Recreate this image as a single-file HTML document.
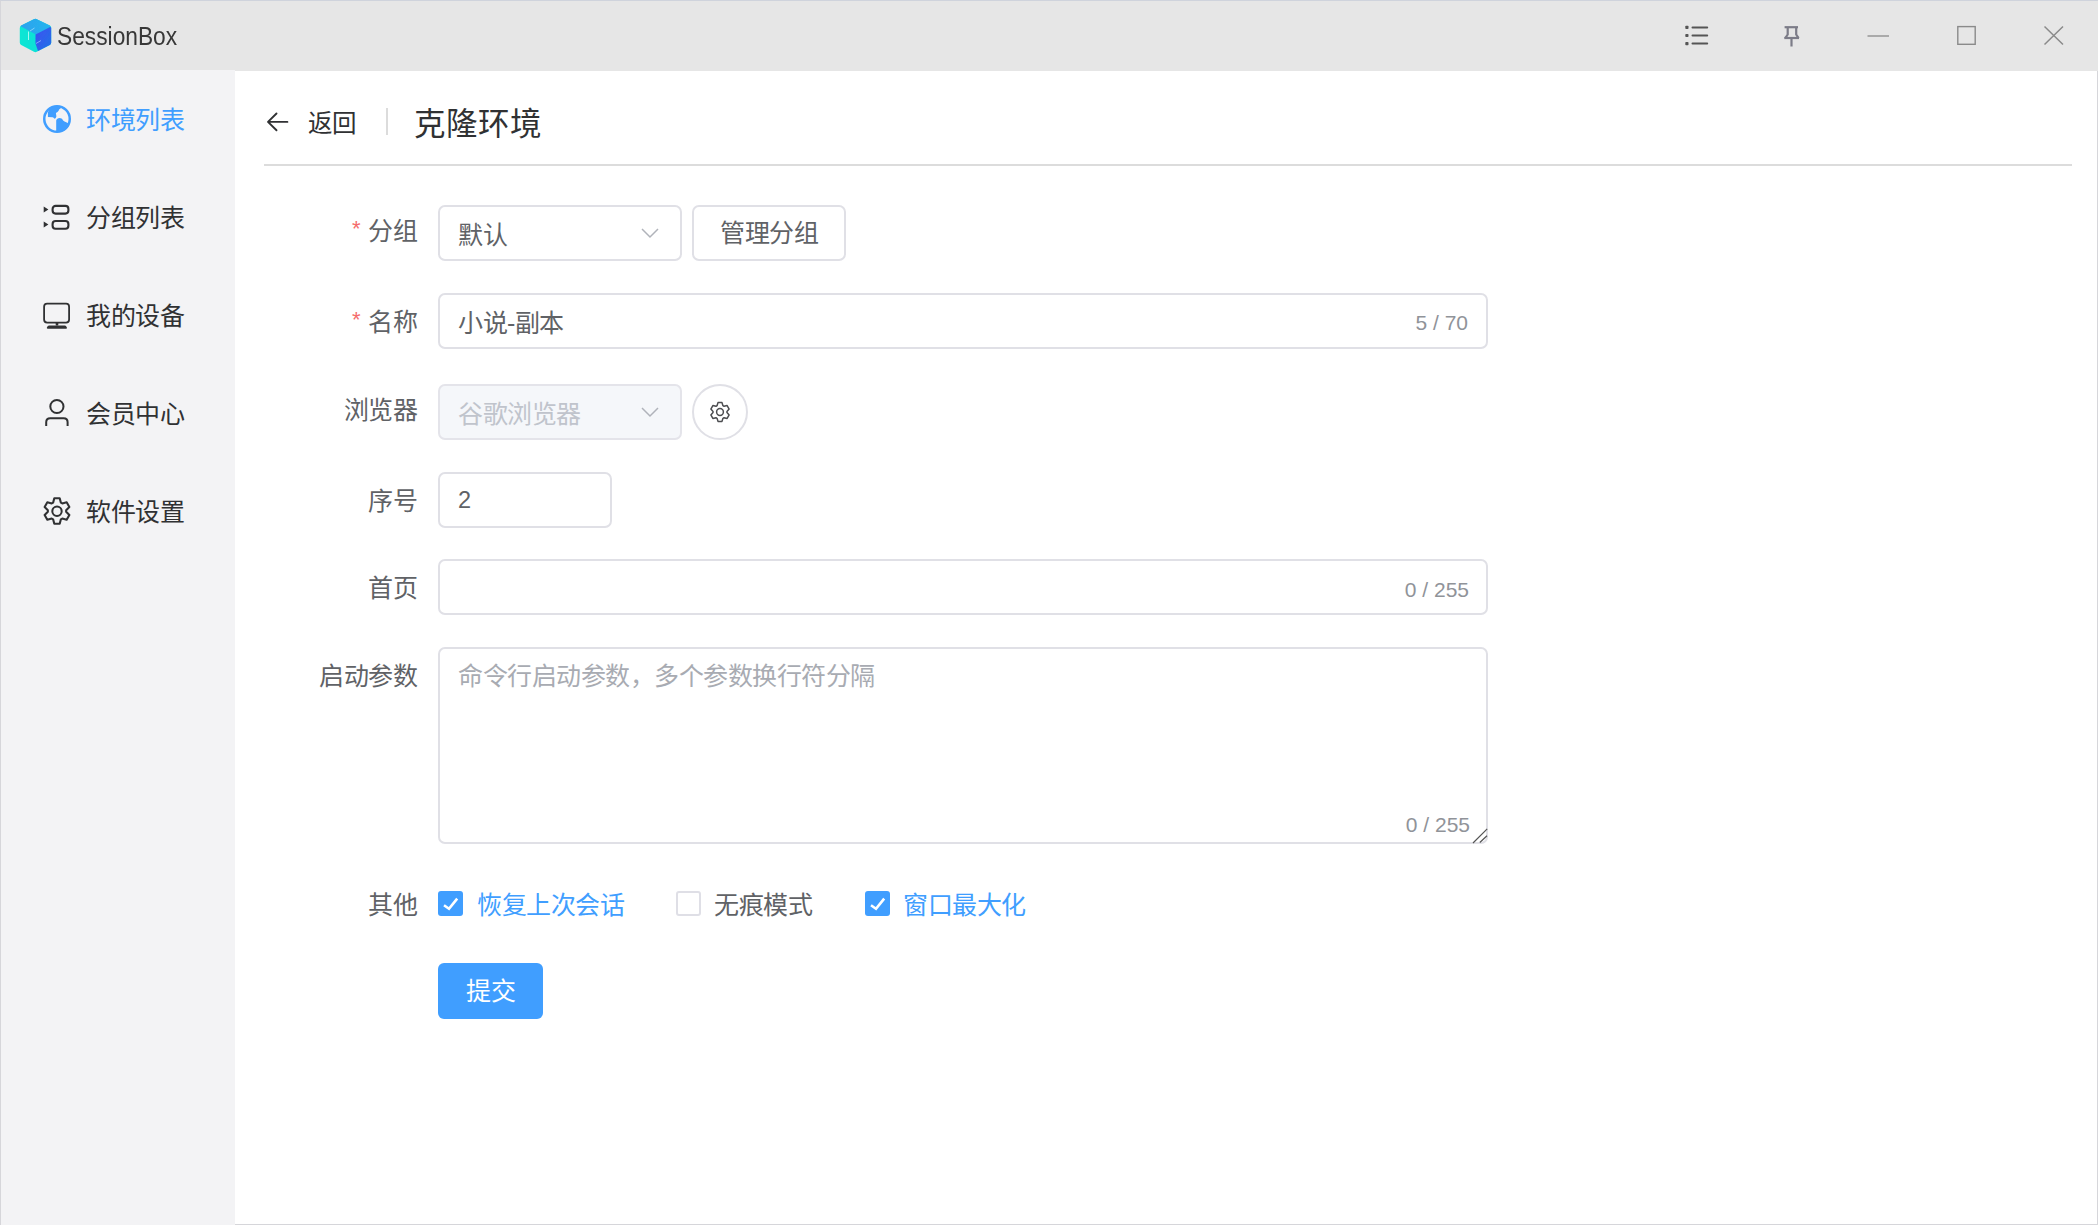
<!DOCTYPE html>
<html lang="zh-CN"><head><meta charset="utf-8">
<style>
*{box-sizing:border-box;margin:0;padding:0}
html,body{width:2098px;height:1225px;overflow:hidden;background:#fff;font-family:"Liberation Sans",sans-serif}
.abs{position:absolute}
#win{position:absolute;left:0;top:0;width:2098px;height:1225px;background:#fff;border:1px solid #d6d6da;border-top-color:#cfd3dc}
#title{position:absolute;left:0;top:0;width:2098px;height:70px;background:#e6e6e6}
#side{position:absolute;left:0px;top:69px;width:234px;height:1155px;background:#f3f3f5}
.nav{position:absolute;left:0;width:235px;height:40px}
.nav .ic{position:absolute;left:42px;top:6px;width:30px;height:30px}
.nav .tx{position:absolute;left:86px;top:0;font-size:25px;letter-spacing:-0.5px;line-height:40px;color:#303133;white-space:nowrap}
.nav.on .tx{color:#409eff}
.lbl{position:absolute;right:1681px;font-size:25px;letter-spacing:-0.5px;line-height:30px;color:#606266;white-space:nowrap;text-align:right}
.req{color:#f56c6c;margin-right:8px;font-size:22px;position:relative;top:-4px}
.inp{position:absolute;left:438px;height:56px;border:2px solid #e0e0e6;border-radius:7px;background:#fff}
.inp .v{position:absolute;left:18px;top:2px;line-height:52px;font-size:25px;letter-spacing:-0.5px;color:#606266;white-space:nowrap}
.cnt{position:absolute;right:18px;font-size:21px;color:#909399;white-space:nowrap}
.chev{position:absolute;right:23px;top:21px;width:18px;height:10px}
.cb{position:absolute;top:891px;width:25px;height:25px;border-radius:3px}
.cb.on{background:#409eff}
.cb.off{border:2px solid #dfdfe6;background:#fff}
.cbt{position:absolute;top:890px;font-size:25px;letter-spacing:-0.5px;line-height:30px;white-space:nowrap}
</style></head>
<body>
<div id="win">
  <div id="title"></div>
  <div id="side"></div>
</div>

<!-- title bar content -->
<svg class="abs" style="left:14px;top:14px" width="42" height="42" viewBox="14 14 42 42">
  <defs>
    <linearGradient id="lg1" x1="0" y1="0" x2="1" y2="0">
      <stop offset="0" stop-color="#0ee6d4"/><stop offset="1" stop-color="#05dcd8"/>
    </linearGradient>
    <linearGradient id="lg2" x1="0" y1="0" x2="1" y2="1">
      <stop offset="0" stop-color="#3d4ff2"/><stop offset="1" stop-color="#1f74e6"/>
    </linearGradient>
    <linearGradient id="lg3" x1="0" y1="0" x2="1" y2="0">
      <stop offset="0" stop-color="#2aa2ee"/><stop offset="1" stop-color="#27b4ee"/>
    </linearGradient>
    <filter id="bl" x="-10%" y="-10%" width="120%" height="120%"><feGaussianBlur stdDeviation="0.55"/></filter>
  </defs>
  <g filter="url(#bl)">
  <path d="M33.8 19.2 Q35.3 18.4 36.8 19.2 L49.8 25.6 Q51.2 26.4 51.2 28 L51.2 42.6 Q51.2 44.2 49.8 45 L36.8 51.8 Q35.4 52.6 34 51.8 L21.2 45 Q19.8 44.2 19.8 42.6 L19.8 28 Q19.8 26.4 21.2 25.6 Z" fill="url(#lg1)"/>
  <path d="M33.8 19.2 Q35.3 18.4 36.8 19.2 L49.8 25.6 Q51 26.2 50 27 L36 34.5 L21 26.5 Q20.2 26 21.2 25.6 Z" fill="url(#lg3)"/>
  <path d="M51.2 27.5 L51.2 42.6 Q51.2 44.2 49.8 45 L38 51 L35.5 43.5 L35.5 34.6 L50 27 Z" fill="url(#lg2)"/>
  <path d="M28.5 31.5 V40" stroke="#c8fff6" stroke-width="1" opacity="0.8"/>
  <path d="M30 31 L34.5 28" stroke="#c0e8ff" stroke-width="1" opacity="0.6"/>
  <path d="M36 43.5 L41 40.5" stroke="#b8d8ff" stroke-width="1" opacity="0.6"/>
  </g>
</svg>
<div class="abs" style="left:57px;top:21px;font-size:25px;line-height:30px;color:#383838;transform:scaleX(0.91);transform-origin:0 0">SessionBox</div>

<!-- sidebar nav -->
<div class="nav on" style="top:100px">
  <svg class="abs" style="left:42px;top:4px" width="30" height="30" viewBox="42 104 30 30">
    <circle cx="57" cy="119" r="12.75" fill="none" stroke="#409eff" stroke-width="2.5"/>
    <path d="M47.9 117 L47.9 112.2 Q50.5 106.5 56 105.8 L60.6 106 L60.6 108.6 Q59 109.2 58.6 110.8 Q57.8 112.3 55.9 112.9 L56.4 116.6 Q55.8 118.9 54.6 118.7 Q53.6 117.6 52.6 117.3 Z" fill="#409eff"/>
    <path d="M56.2 131.8 L56.2 120.6 Q56.7 118.1 59.8 118.1 Q62.6 118.3 63.1 120.4 L64.5 121.6 L66.2 122.3 L68.6 123.6 L69.5 125 Q66 130.5 60 131.8 Z" fill="#409eff"/>
  </svg>
  <div class="tx">环境列表</div>
</div>
<div class="nav" style="top:198px">
  <svg class="abs" style="left:40px;top:2px" width="32" height="34" viewBox="0 0 32 34">
    <path d="M3.7 6.5 L8.4 9.5 L3.7 12.5Z M3.7 21.6 L8.4 24.6 L3.7 27.6Z" fill="#303133"/>
    <rect x="12.6" y="5.9" width="15.8" height="7.7" rx="3" fill="none" stroke="#303133" stroke-width="2.1"/>
    <rect x="12.6" y="21" width="15.8" height="7.7" rx="3" fill="none" stroke="#303133" stroke-width="2.1"/>
  </svg>
  <div class="tx">分组列表</div>
</div>
<div class="nav" style="top:296px">
  <svg class="abs" style="left:40px;top:2px" width="34" height="34" viewBox="0 0 34 34">
    <rect x="4.1" y="5.7" width="25" height="18.9" rx="3" fill="none" stroke="#303133" stroke-width="1.8"/>
    <path d="M15.6 24.5 L18.4 24.5 L18.2 27.6 L15.8 27.6Z" fill="#303133"/>
    <path d="M9.2 27.4 L24.8 27.4 Q25.6 27.4 26 28 L26.9 29.6 Q27.3 30.7 26.2 30.7 L7.6 30.7 Q6.5 30.7 6.9 29.6 L7.8 28 Q8.2 27.4 9.2 27.4Z" fill="#303133"/>
  </svg>
  <div class="tx">我的设备</div>
</div>
<div class="nav" style="top:394px">
  <svg class="abs" style="left:40px;top:0px" width="34" height="34" viewBox="0 0 34 34">
    <circle cx="16.9" cy="12.5" r="6.6" fill="none" stroke="#303133" stroke-width="2"/>
    <path d="M6.2 32 L6.2 28.3 Q6.2 24.3 10.2 24.3 L23.6 24.3 Q27.6 24.3 27.6 28.3 L27.6 32" fill="none" stroke="#303133" stroke-width="2"/>
  </svg>
  <div class="tx">会员中心</div>
</div>
<div class="nav" style="top:492px">
  <svg class="abs" style="left:42px;top:4px" width="30" height="30" viewBox="0 0 30 30">
    <path d="M11.11 6.66 L12.30 2.28 L17.70 2.28 L18.89 6.66 L20.28 7.46 L24.66 6.30 L27.36 10.98 L24.16 14.20 L24.16 15.80 L27.36 19.02 L24.66 23.70 L20.28 22.54 L18.89 23.34 L17.70 27.72 L12.30 27.72 L11.11 23.34 L9.72 22.54 L5.34 23.70 L2.64 19.02 L5.84 15.80 L5.84 14.20 L2.64 10.98 L5.34 6.30 L9.72 7.46Z" fill="none" stroke="#303133" stroke-width="2.1" stroke-linejoin="round"/>
    <circle cx="15" cy="15.3" r="4.7" fill="none" stroke="#303133" stroke-width="2"/>
  </svg>
  <div class="tx">软件设置</div>
</div>

<!-- page header -->
<div class="abs" style="left:308px;top:109px;font-size:24.5px;line-height:30px;color:#303133">返回</div>
<div class="abs" style="left:386px;top:108px;width:2px;height:27px;background:#dcdcdc"></div>
<div class="abs" style="left:414px;top:104px;font-size:31.5px;line-height:40px;color:#303133">克隆环境</div>
<div class="abs" style="left:264px;top:164px;width:1808px;height:2px;background:#dcdcdc"></div>

<!-- form -->
<div class="lbl" style="top:216px"><span class="req">*</span>分组</div>
<div class="inp" style="top:205px;width:244px"><div class="v">默认</div></div>
<div class="abs" style="left:692px;top:205px;width:154px;height:56px;border:2px solid #e0e0e6;border-radius:7px;font-size:25px;letter-spacing:-0.5px;line-height:52px;text-align:center;color:#606266">管理分组</div>

<div class="lbl" style="top:307px"><span class="req">*</span>名称</div>
<div class="inp" style="top:293px;width:1050px"><div class="v">小说-副本</div><div class="cnt" style="top:16px">5 / 70</div></div>

<div class="lbl" style="top:395px">浏览器</div>
<div class="inp" style="top:384px;width:244px;background:#f5f7fa;border-color:#e4e4ea"><div class="v" style="color:#c0c4cc">谷歌浏览器</div></div>
<div class="abs" style="left:692px;top:384px;width:56px;height:56px;border:2px solid #e0e0e6;border-radius:50%"></div>

<div class="lbl" style="top:486px">序号</div>
<div class="inp" style="top:472px;width:174px"><div class="v" style="font-size:23.5px;top:0">2</div></div>

<div class="lbl" style="top:573px">首页</div>
<div class="inp" style="top:559px;width:1050px"><div class="cnt" style="top:17px;right:17px">0 / 255</div></div>

<div class="lbl" style="top:661px">启动参数</div>
<div class="inp" style="top:647px;width:1050px;height:197px"><div class="v" style="color:#a8abb2;top:0;line-height:54px;font-size:25px">命令行启动参数，多个参数换行符分隔</div><div class="cnt" style="top:164px;right:16px">0 / 255</div></div>

<div class="lbl" style="top:890px">其他</div>
<div class="cb on" style="left:438px"></div>
<div class="cbt" style="left:477px;color:#409eff">恢复上次会话</div>
<div class="cb off" style="left:676px"></div>
<div class="cbt" style="left:714px;color:#606266">无痕模式</div>
<div class="cb on" style="left:865px"></div>
<div class="cbt" style="left:903px;color:#409eff">窗口最大化</div>

<div class="abs" style="left:438px;top:963px;width:105px;height:56px;background:#409eff;border-radius:6px;color:#fff;font-size:25px;letter-spacing:-0.5px;line-height:56px;text-align:center">提交</div>


<!-- window controls -->
<svg class="abs" style="left:1680px;top:20px" width="400" height="32" viewBox="1680 20 400 32">
  <g fill="#555">
    <rect x="1685.3" y="25.8" width="3.2" height="3.2" rx="0.8"/>
    <rect x="1685.3" y="33.9" width="3.2" height="3.2" rx="0.8"/>
    <rect x="1685.3" y="42" width="3.2" height="3.2" rx="0.8"/>
  </g>
  <g stroke="#555" stroke-width="2" stroke-linecap="round">
    <path d="M1692.5 27.4 H1707.2 M1692.5 35.5 H1707.2 M1692.5 43.6 H1707.2"/>
  </g>
  <g stroke="#7c7c88" stroke-width="2.2" fill="none">
    <path d="M1784.6 27.2 H1798"/>
    <path d="M1787.7 28 V34.5 L1785.3 38.2 M1796.2 28 V34.5 L1798.6 38.2"/>
    <path d="M1784.3 38 H1799"/>
    <path d="M1791.5 39 V46.5"/>
  </g>
  <path d="M1867.5 36 H1889" stroke="#a3a3a3" stroke-width="1.8"/>
  <rect x="1957.8" y="26.6" width="17.4" height="17.7" fill="none" stroke="#8a8a8a" stroke-width="1.4"/>
  <path d="M2044.5 26.5 L2063 44.5 M2063 26.5 L2044.5 44.5" stroke="#8a8a8a" stroke-width="1.5"/>
</svg>
<!-- back arrow -->
<svg class="abs" style="left:262px;top:108px" width="30" height="28" viewBox="262 108 30 28">
  <path d="M287.4 121.9 H268.5 M276.5 113.5 L268 121.9 L276.5 130.3" fill="none" stroke="#303133" stroke-width="1.9" stroke-linecap="round" stroke-linejoin="round"/>
</svg>
<!-- chevrons -->
<svg class="abs" style="left:636px;top:224px" width="28" height="18" viewBox="636 224 28 18">
  <path d="M642 229 L650 237 L658 229" fill="none" stroke="#b0b3ba" stroke-width="1.5"/>
</svg>
<svg class="abs" style="left:636px;top:402px" width="28" height="18" viewBox="636 402 28 18">
  <path d="M642 408 L650 416 L658 408" fill="none" stroke="#b0b3ba" stroke-width="1.5"/>
</svg>
<!-- small gear -->
<svg class="abs" style="left:709px;top:401px" width="22" height="22" viewBox="0 0 22 22">
  <path d="M8.04 4.66 L9.00 1.61 L13.00 1.61 L13.96 4.66 L15.02 5.27 L18.13 4.58 L20.13 8.03 L17.97 10.39 L17.97 11.61 L20.13 13.97 L18.13 17.42 L15.02 16.73 L13.96 17.34 L13.00 20.39 L9.00 20.39 L8.04 17.34 L6.98 16.73 L3.87 17.42 L1.87 13.97 L4.03 11.61 L4.03 10.39 L1.87 8.03 L3.87 4.58 L6.98 5.27Z" fill="none" stroke="#4c4d50" stroke-width="1.5" stroke-linejoin="round"/>
  <circle cx="11" cy="11" r="3.4" fill="none" stroke="#4c4d50" stroke-width="1.5"/>
</svg>
<!-- checkmarks -->
<svg class="abs" style="left:438px;top:891px" width="24" height="24" viewBox="0 0 24 24">
  <path d="M6 14.3 L11 17.8 L19.2 7.6" fill="none" stroke="#fff" stroke-width="2.6"/>
</svg>
<svg class="abs" style="left:865px;top:891px" width="24" height="24" viewBox="0 0 24 24">
  <path d="M6 14.3 L11 17.8 L19.2 7.6" fill="none" stroke="#fff" stroke-width="2.6"/>
</svg>
<!-- resize handle -->
<svg class="abs" style="left:1470px;top:826px" width="20" height="20" viewBox="1470 826 20 20">
  <path d="M1473 843 L1487.2 828.8 M1479.8 842.5 L1487 835.8" stroke="#555" stroke-width="1.2"/>
</svg>
</body></html>
